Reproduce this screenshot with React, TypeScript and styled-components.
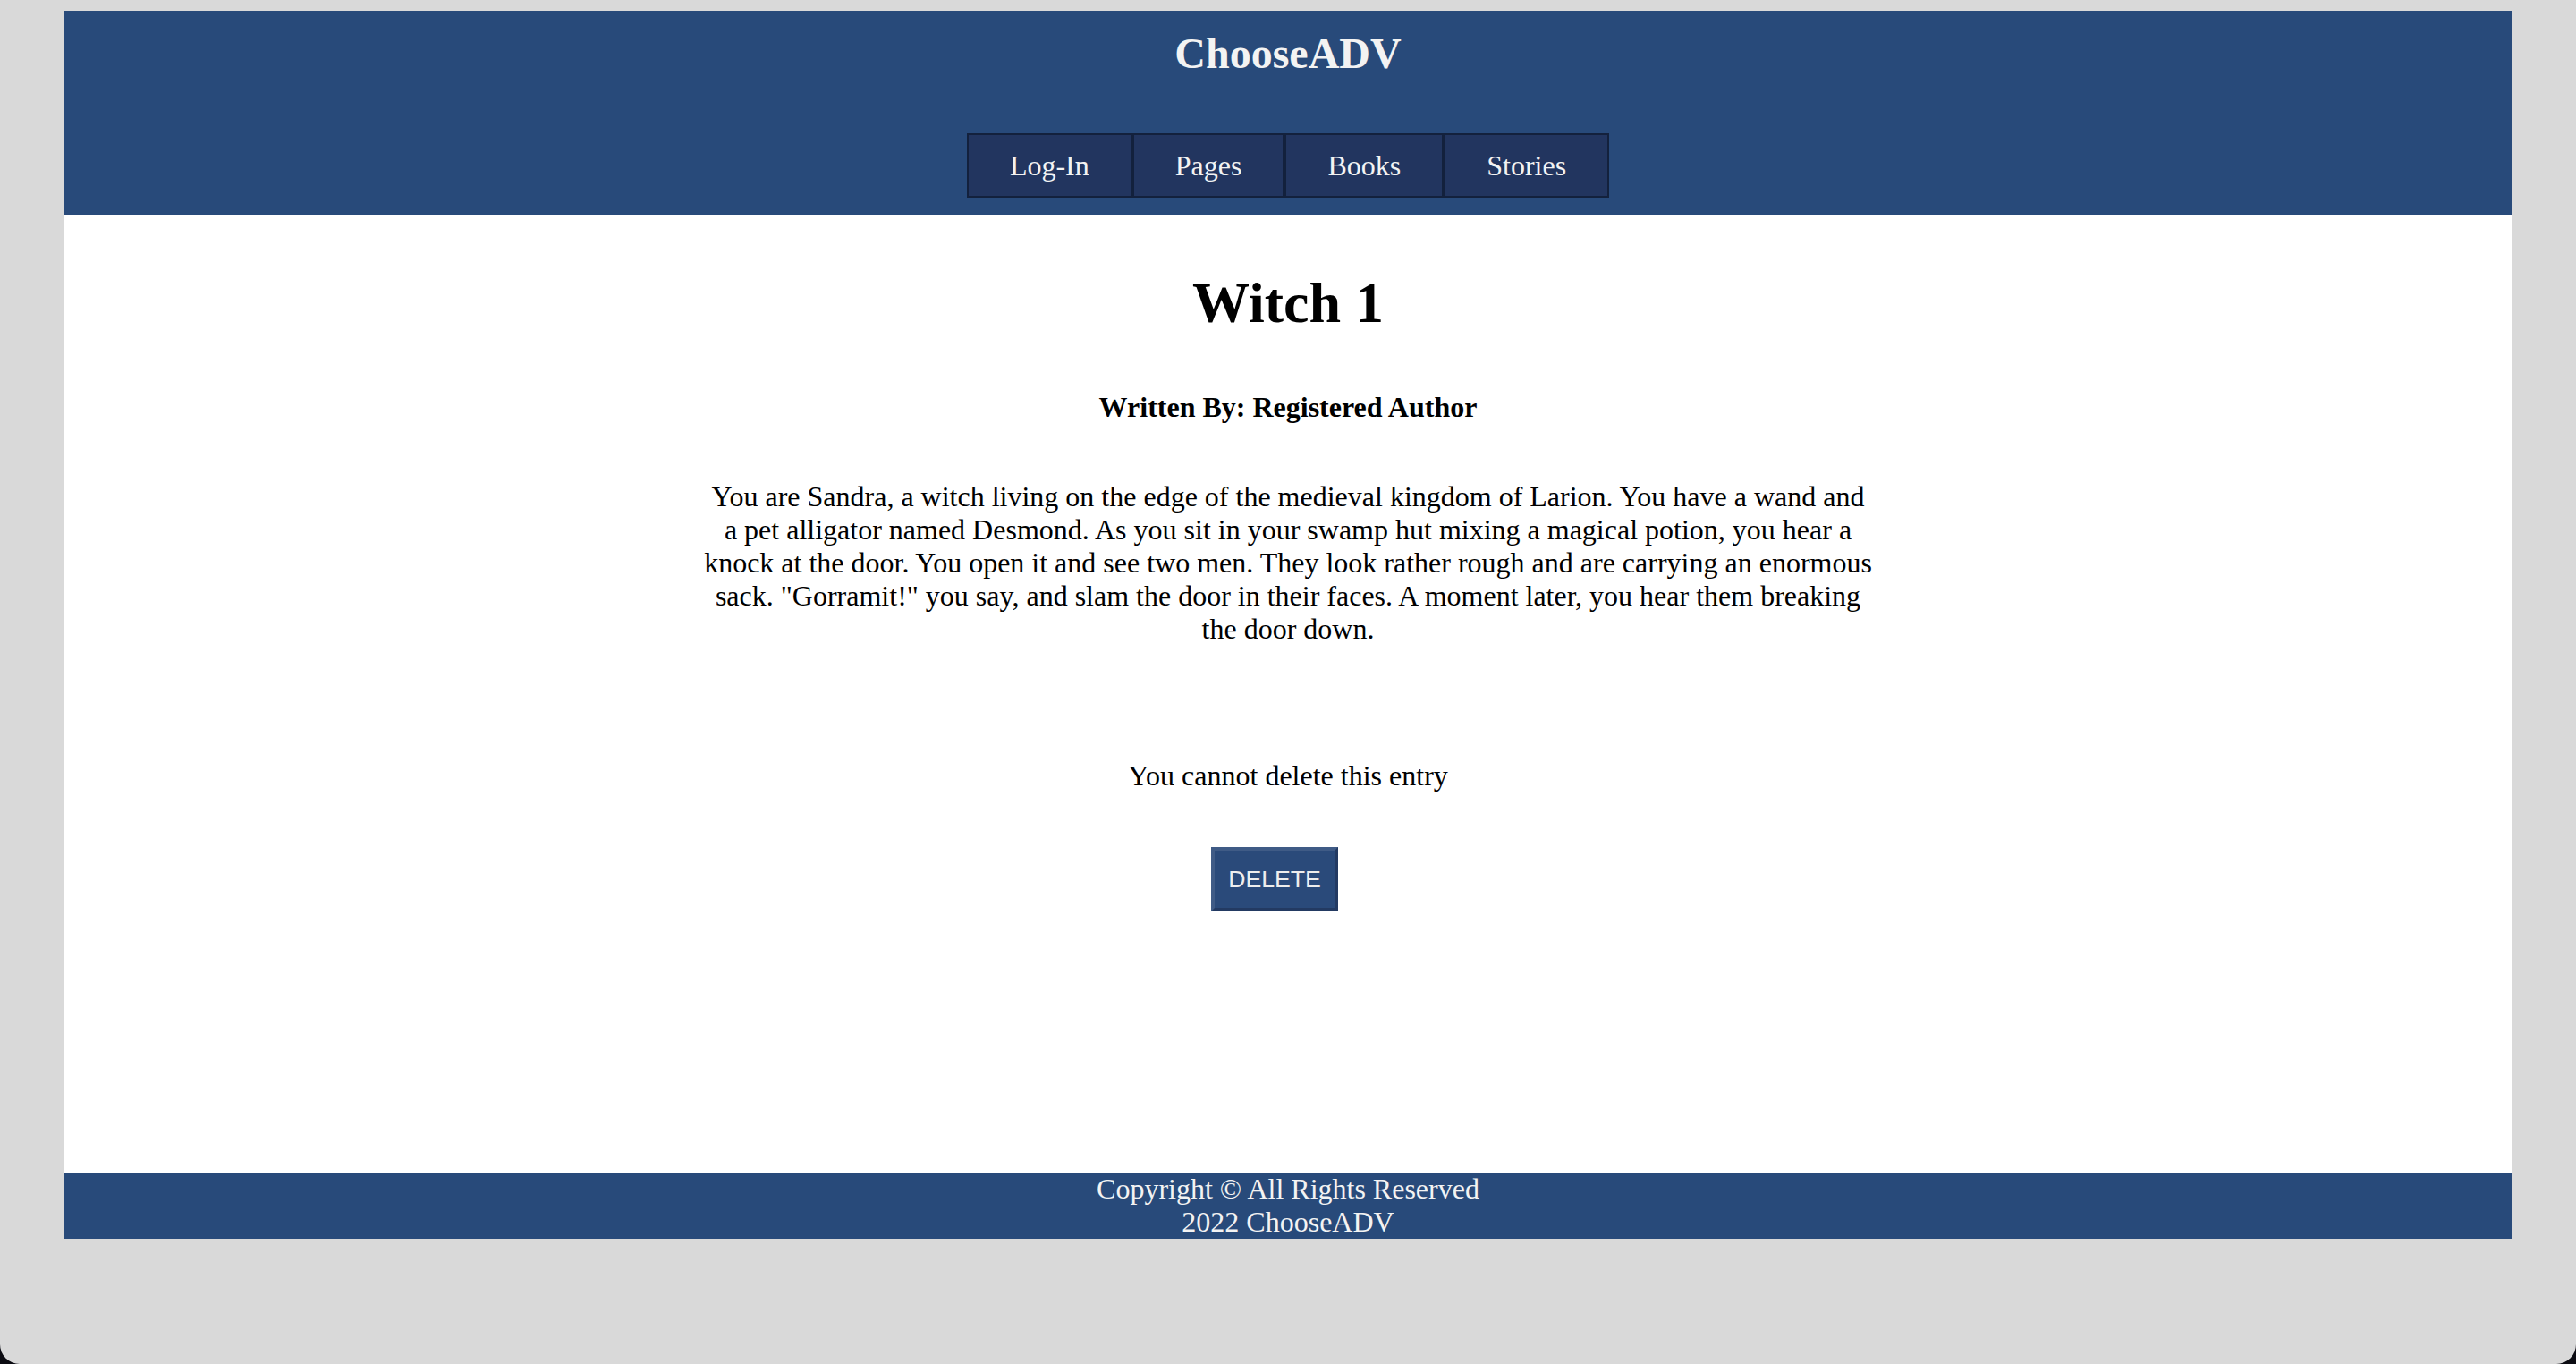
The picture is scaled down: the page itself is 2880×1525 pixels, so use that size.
import React from 'react';
import styled, { createGlobalStyle } from 'styled-components';

const GlobalStyle = createGlobalStyle`
  html, body {
    margin: 0;
    padding: 0;
    background: #0b0b12;
  }

  body {
    font-family: 'Liberation Serif', 'Times New Roman', serif;
  }
`;

const Frame = styled.div`
  min-height: 1525px;
  box-sizing: border-box;
  padding-top: 12px;
  background-color: #d9d9d9;
  border-radius: 0 0 22px 22px;
`;

const Page = styled.div`
  width: 95%;
  margin: 0 auto;
  display: flex;
  flex-direction: column;
`;

const Header = styled.header`
  display: flex;
  flex-direction: column;
  align-items: center;
  padding: 20px 0 19px 0;
  background-color: #284a7a;
  color: #f3f3f3;
`;

const SiteTitle = styled.h2`
  margin: 0 0 62px 0;
  font-size: 48px;
  line-height: 55px;
  font-weight: 700;
`;

const Nav = styled.nav`
  display: flex;
`;

const NavButton = styled.a`
  display: block;
  padding: 15px 46px;
  font-size: 32px;
  line-height: 38px;
  color: #f3f3f3;
  background-color: #22355f;
  border: 2px solid #13213d;
  text-decoration: none;
  cursor: pointer;
`;

const Main = styled.main`
  height: 1071px;
  display: flex;
  flex-direction: column;
  align-items: center;
  padding-top: 62px;
  box-sizing: border-box;
  background-color: #ffffff;
  color: #000000;
`;

const StoryTitle = styled.h1`
  margin: 0 0 61px 0;
  font-size: 64px;
  line-height: 74px;
  font-weight: 700;
`;

const Author = styled.h4`
  margin: 0 0 63px 0;
  font-size: 32px;
  line-height: 37px;
  font-weight: 700;
`;

const StoryText = styled.p`
  width: 1310px;
  margin: 0 0 127px 0;
  font-size: 32px;
  line-height: 37px;
  text-align: center;
`;

const Notice = styled.p`
  margin: 0 0 61px 0;
  font-size: 32px;
  line-height: 37px;
`;

const ButtonRow = styled.div`
  display: flex;
  justify-content: center;
  padding-right: 30px;
`;

const DeleteButton = styled.button`
  padding: 17px 15px;
  font-family: 'Liberation Sans', Arial, sans-serif;
  font-size: 26.67px;
  line-height: 30px;
  color: #eeeeee;
  background-color: #2a4a7a;
  border-style: solid;
  border-width: 4px;
  border-color: #3f5b86 #233a62 #233a62 #3f5b86;
  cursor: pointer;
`;

const Footer = styled.footer`
  background-color: #284a7a;
  color: #f3f3f3;
  font-size: 32px;
  line-height: 37px;
  text-align: center;
`;

export default function App() {
  return (
    <>
      <GlobalStyle />
      <Frame>
        <Page>
          <Header>
            <SiteTitle>ChooseADV</SiteTitle>
            <Nav>
              <NavButton>Log-In</NavButton>
              <NavButton>Pages</NavButton>
              <NavButton>Books</NavButton>
              <NavButton>Stories</NavButton>
            </Nav>
          </Header>
          <Main>
            <StoryTitle>Witch 1</StoryTitle>
            <Author>Written By: Registered Author</Author>
            <StoryText>
              You are Sandra, a witch living on the edge of the medieval kingdom of Larion. You have a
              wand and a pet alligator named Desmond. As you sit in your swamp hut mixing a magical
              potion, you hear a knock at the door. You open it and see two men. They look rather
              rough and are carrying an enormous sack. "Gorramit!" you say, and slam the door in their
              faces. A moment later, you hear them breaking the door down.
            </StoryText>
            <Notice>You cannot delete this entry</Notice>
            <ButtonRow>
              <DeleteButton>DELETE</DeleteButton>
            </ButtonRow>
          </Main>
          <Footer>
            Copyright © All Rights Reserved
            <br />
            2022 ChooseADV
          </Footer>
        </Page>
      </Frame>
    </>
  );
}
